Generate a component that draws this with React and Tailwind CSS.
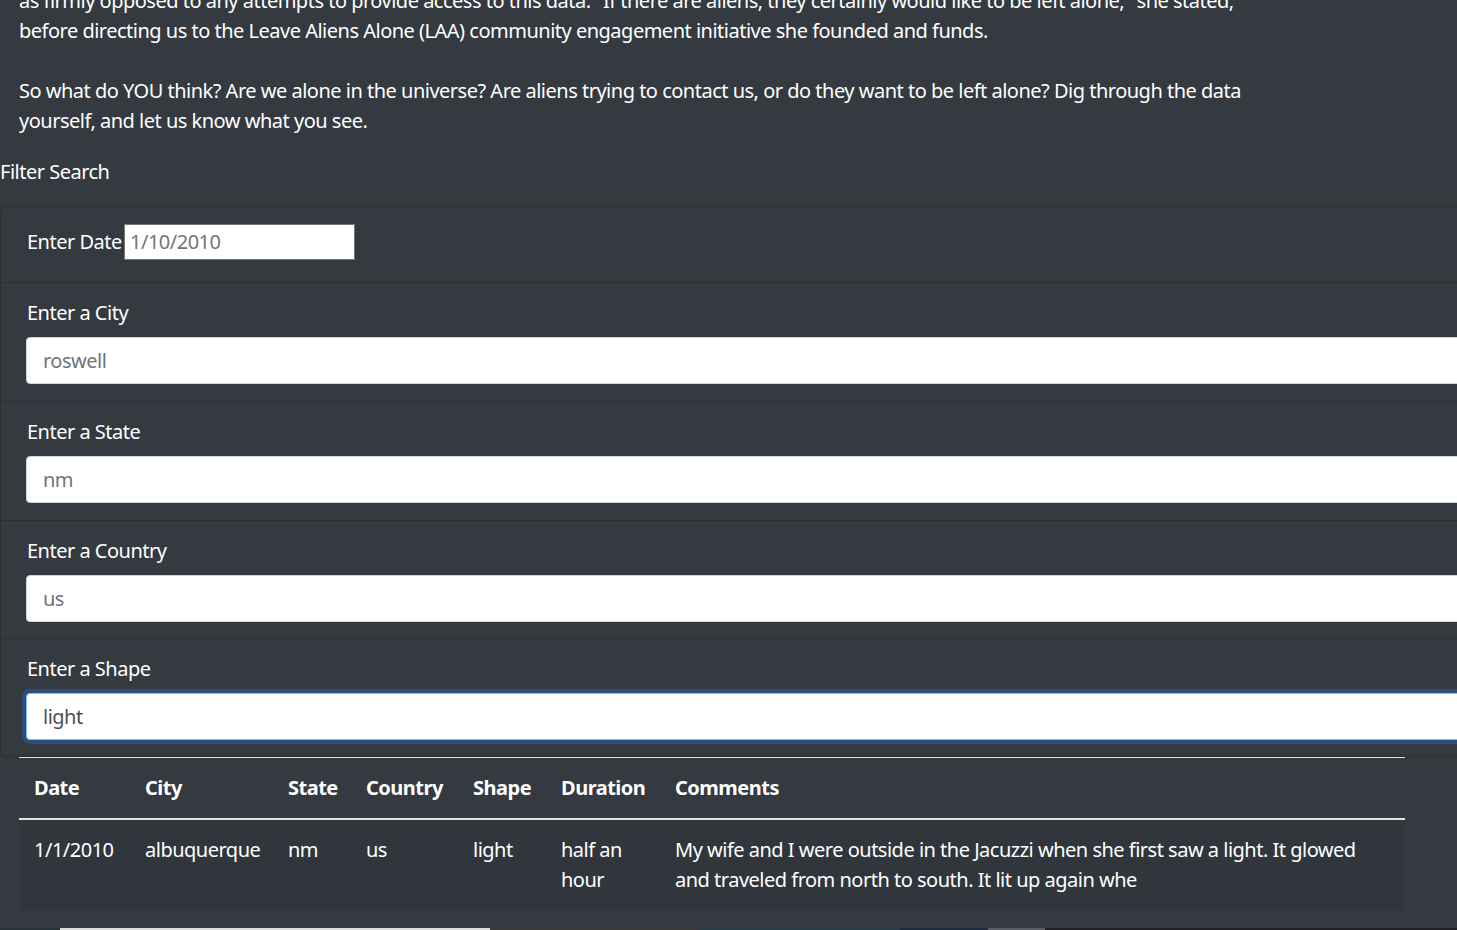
import React from "react";

const cols = "grid grid-cols-[111px_143px_78px_107px_88px_114px_745px]";

function Field({ label, value, focused, pb }) {
  return (
    <div className={"border-t border-[#2b3035] px-[25px] pt-[15px] " + pb}>
      <div className="h-[30px] leading-[30px] pl-[1px]">{label}</div>
      <div
        className={
          "mt-[9px] h-[47px] w-[1500px] rounded-[4px] bg-white pl-[16px] leading-[45px] " +
          (focused
            ? "border border-[#80bdff] text-[#495057] shadow-[0_0_0_4px_#2a4f7d]"
            : "border border-[#ced4da] text-[#6c757d]")
        }
      >
        {value}
      </div>
    </div>
  );
}

export default function App() {
  return (
    <div className="relative flex h-[930px] w-[1457px] flex-col overflow-hidden bg-[#343a40] font-['Noto_Sans',sans-serif] text-[20px] leading-[30px] tracking-[-0.5px] text-white">
      <div className="-mt-[14px] whitespace-nowrap pl-[19px]">
        <p>
          as firmly opposed to any attempts to provide access to this data. "If there are aliens, they certainly would like to be left alone," she stated,
          <br />
          before directing us to the Leave Aliens Alone (LAA) community engagement initiative she founded and funds.
        </p>
        <p className="mt-[30px]">
          So what do YOU think? Are we alone in the universe? Are aliens trying to contact us, or do they want to be left alone? Dig through the data
          <br />
          yourself, and let us know what you see.
        </p>
      </div>

      <div className="mt-[21px]">Filter Search</div>

      <div className="mt-[19px] w-[1520px] overflow-hidden rounded-l-[5px] border border-[#2b3035]">
        <div className="flex h-[75px] items-center whitespace-nowrap px-[26px] pb-[6px]">
          <span className="w-[97px] shrink-0">Enter Date</span>
          <div className="h-[36px] w-[231px] shrink-0 border border-[#767676] bg-white pl-[5px] leading-[34px] text-[#757575]">
            1/10/2010
          </div>
        </div>
        <Field label="Enter a City" value="roswell" pb="pb-[17px]" />
        <Field label="Enter a State" value="nm" pb="pb-[17px]" />
        <Field label="Enter a Country" value="us" pb="pb-[16px]" />
        <Field label="Enter a Shape" value="light" focused pb="pb-[16px]" />
      </div>

      <div className="ml-[19px] w-[1386px] border-t border-[#dee2e6]">
        <div className={cols + " border-b-2 border-[#dee2e6] font-bold"}>
          {["Date", "City", "State", "Country", "Shape", "Duration", "Comments"].map((h) => (
            <div key={h} className="p-[15px]">
              {h}
            </div>
          ))}
        </div>
        <div className={cols + " bg-[#31363c]"}>
          <div className="p-[15px]">1/1/2010</div>
          <div className="p-[15px]">albuquerque</div>
          <div className="p-[15px]">nm</div>
          <div className="p-[15px]">us</div>
          <div className="p-[15px]">light</div>
          <div className="p-[15px]">
            half an
            <br />
            hour
          </div>
          <div className="whitespace-nowrap p-[15px]">
            My wife and I were outside in the Jacuzzi when she first saw a light. It glowed
            <br />
            and traveled from north to south. It lit up again whe
          </div>
        </div>
      </div>

      <div className="mt-[18px] flex h-[2px] w-full shrink-0">
        <div className="w-[60px] bg-[#263238]" />
        <div className="w-[430px] bg-[#dcdcdc]" />
        <div className="w-[210px] bg-[#3a3838]" />
        <div className="w-[200px] bg-[#2a3d44]" />
        <div className="w-[88px] bg-[#1f2a3d]" />
        <div className="w-[57px] bg-[#5a5d63]" />
        <div className="flex-1 bg-[#222226]" />
      </div>
    </div>
  );
}
